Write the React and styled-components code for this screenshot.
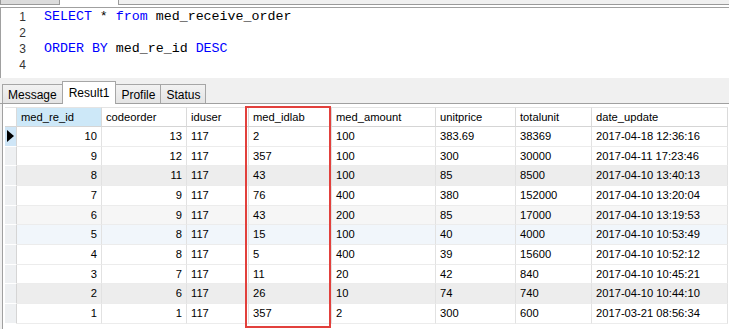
import React from "react"
import styled, { createGlobalStyle } from "styled-components"

const Global = createGlobalStyle`
  html, body {
    margin: 0;
    padding: 0;
    background: #f0f0f0;
    overflow: hidden;
  }
`

const Window = styled.div`
  width: 729px;
  height: 329px;
  overflow: hidden;
  position: relative;
  font-family: "Liberation Sans", Arial, sans-serif;
  font-size: 11px;
  color: #000;
`

const TopStrip = styled.div`
  height: 7px;
  display: flex;
  border-bottom: 1px solid #a0a0a0;
  background: #fff;
`

const QueryTab = styled.div`
  width: 58px;
  height: 4px;
  background: #dcdcdc;
  border: 1px solid #9a9a9a;
  border-top: none;
`

const Spacer = styled.div`
  width: 58px;
`

const InfoBox = styled.div`
  flex: 1;
  height: 4px;
  background: #f0f0f0;
  border-left: 1px solid #9a9a9a;
  border-bottom: 1px solid #9a9a9a;
`

const Editor = styled.div`
  height: 70px;
  background: #fff;
  border-left: 1px solid #a0a0a0;
  padding-top: 1px;
  box-sizing: border-box;
`

const CodeLine = styled.div`
  display: flex;
  height: 16px;
  line-height: 16px;
`

const LineNo = styled.span`
  width: 25px;
  text-align: right;
  color: #333;
  font-family: "Liberation Sans", Arial, sans-serif;
  font-size: 12px;
`

const Code = styled.span`
  margin-left: 18px;
  font-family: "Liberation Mono", "Courier New", monospace;
  font-size: 13.3px;
  white-space: pre;
`

const Kw = styled.span`
  color: #0000ff;
`

const TabBar = styled.div`
  height: 26px;
  display: flex;
  align-items: flex-end;
  padding-left: 3px;
  background: #f0f0f0;
  border-bottom: 1px solid #a0a0a0;
  box-sizing: border-box;
`

const Tab = styled.div`
  height: ${(p) => (p.$active ? "23px" : "19px")};
  padding: 0 ${(p) => (p.$active ? "6px" : "5px")};
  margin-left: -1px;
  display: flex;
  align-items: center;
  padding-top: ${(p) => (p.$active ? "0" : "1px")};
  box-sizing: border-box;
  font-size: 12px;
  border: 1px solid #a6a6a6;
  border-bottom: none;
  background: ${(p) => (p.$active ? "#fff" : "linear-gradient(#f2f2f2, #e4e4e4)")};
  position: relative;
  z-index: ${(p) => (p.$active ? 1 : 0)};
  margin-bottom: ${(p) => (p.$active ? "-1px" : "0")};
`

const GridArea = styled.div`
  position: relative;
  background: #fff;
  border-left: 1px solid #a0a0a0;
  margin-left: 2px;
  padding: 3px 0 0 2px;
  height: 230px;
`

const Grid = styled.div`
  display: grid;
  grid-template-columns: 12px 85px 85px 62px 83px 104px 80px 76px 136px;
  font-size: 11.2px;
`

const HeadCell = styled.div`
  height: 20px;
  line-height: 19px;
  padding-left: 4px;
  box-sizing: border-box;
  background: ${(p) => (p.$sel ? "#cde8f8" : "#fff")};
  border-right: 1px solid #dadada;
  border-bottom: 1px solid #d5d5d5;
  border-top: 1px solid #e4e4e4;
  white-space: nowrap;
  overflow: hidden;
`

const Indicator = styled.div`
  height: 19.67px;
  box-sizing: border-box;
  background: ${(p) => (p.$current ? "#cfe6f7" : "#eef0f2")};
  border-bottom: 1px solid #fff;
  border-right: 1px solid #d5d5d5;
  display: flex;
  align-items: center;
  padding-left: 2px;
`

const Arrow = styled.span`
  width: 0;
  height: 0;
  border-top: 6px solid transparent;
  border-bottom: 6px solid transparent;
  border-left: 7px solid #000;
`

const Cell = styled.div`
  height: 19.67px;
  line-height: 19px;
  box-sizing: border-box;
  padding: ${(p) => (p.$right ? "0 4px 0 0" : "0 0 0 4px")};
  text-align: ${(p) => (p.$right ? "right" : "left")};
  background: ${(p) => p.$bg};
  border-right: 1px solid #e2e2e2;
  border-bottom: 1px solid #ececec;
  white-space: nowrap;
  overflow: hidden;
`

const Highlight = styled.div`
  position: absolute;
  left: 242px;
  top: 2px;
  width: 82px;
  height: 218px;
  border: 2.5px solid #e2403c;
  pointer-events: none;
`

const headers = ["med_re_id", "codeorder", "iduser", "med_idlab", "med_amount", "unitprice", "totalunit", "date_update"]

const rows = [
  ["10", "13", "117", "2", "100", "383.69", "38369", "2017-04-18 12:36:16"],
  ["9", "12", "117", "357", "100", "300", "30000", "2017-04-11 17:23:46"],
  ["8", "11", "117", "43", "100", "85", "8500", "2017-04-10 13:40:13"],
  ["7", "9", "117", "76", "400", "380", "152000", "2017-04-10 13:20:04"],
  ["6", "9", "117", "43", "200", "85", "17000", "2017-04-10 13:19:53"],
  ["5", "8", "117", "15", "100", "40", "4000", "2017-04-10 10:53:49"],
  ["4", "8", "117", "5", "400", "39", "15600", "2017-04-10 10:52:12"],
  ["3", "7", "117", "11", "20", "42", "840", "2017-04-10 10:45:21"],
  ["2", "6", "117", "26", "10", "74", "740", "2017-04-10 10:44:10"],
  ["1", "1", "117", "357", "2", "300", "600", "2017-03-21 08:56:34"],
]

const rowBg = ["#fff", "#fff", "#ededed", "#fff", "#f6f6f6", "#f1f6fb", "#fff", "#fff", "#ededed", "#fff"]

const App = () => {
  return (
    <Window>
      <Global />
      <TopStrip>
        <QueryTab />
        <Spacer />
        <InfoBox />
      </TopStrip>
      <Editor>
        <CodeLine>
          <LineNo>1</LineNo>
          <Code>
            <Kw>SELECT</Kw> * <Kw>from</Kw> med_receive_order
          </Code>
        </CodeLine>
        <CodeLine>
          <LineNo>2</LineNo>
        </CodeLine>
        <CodeLine>
          <LineNo>3</LineNo>
          <Code>
            <Kw>ORDER BY</Kw> med_re_id <Kw>DESC</Kw>
          </Code>
        </CodeLine>
        <CodeLine>
          <LineNo>4</LineNo>
        </CodeLine>
      </Editor>
      <TabBar>
        <Tab>Message</Tab>
        <Tab $active>Result1</Tab>
        <Tab>Profile</Tab>
        <Tab>Status</Tab>
      </TabBar>
      <GridArea>
        <Grid>
          <HeadCell />
          {headers.map((h, i) => (
            <HeadCell key={h} $sel={i === 0}>
              {h}
            </HeadCell>
          ))}
          {rows.map((r, ri) => (
            <React.Fragment key={ri}>
              <Indicator $current={ri === 0}>{ri === 0 && <Arrow />}</Indicator>
              {r.map((v, ci) => (
                <Cell key={ci} $right={ci < 2} $bg={rowBg[ri]}>
                  {v}
                </Cell>
              ))}
            </React.Fragment>
          ))}
        </Grid>
        <Highlight />
      </GridArea>
    </Window>
  )
}

export default App
